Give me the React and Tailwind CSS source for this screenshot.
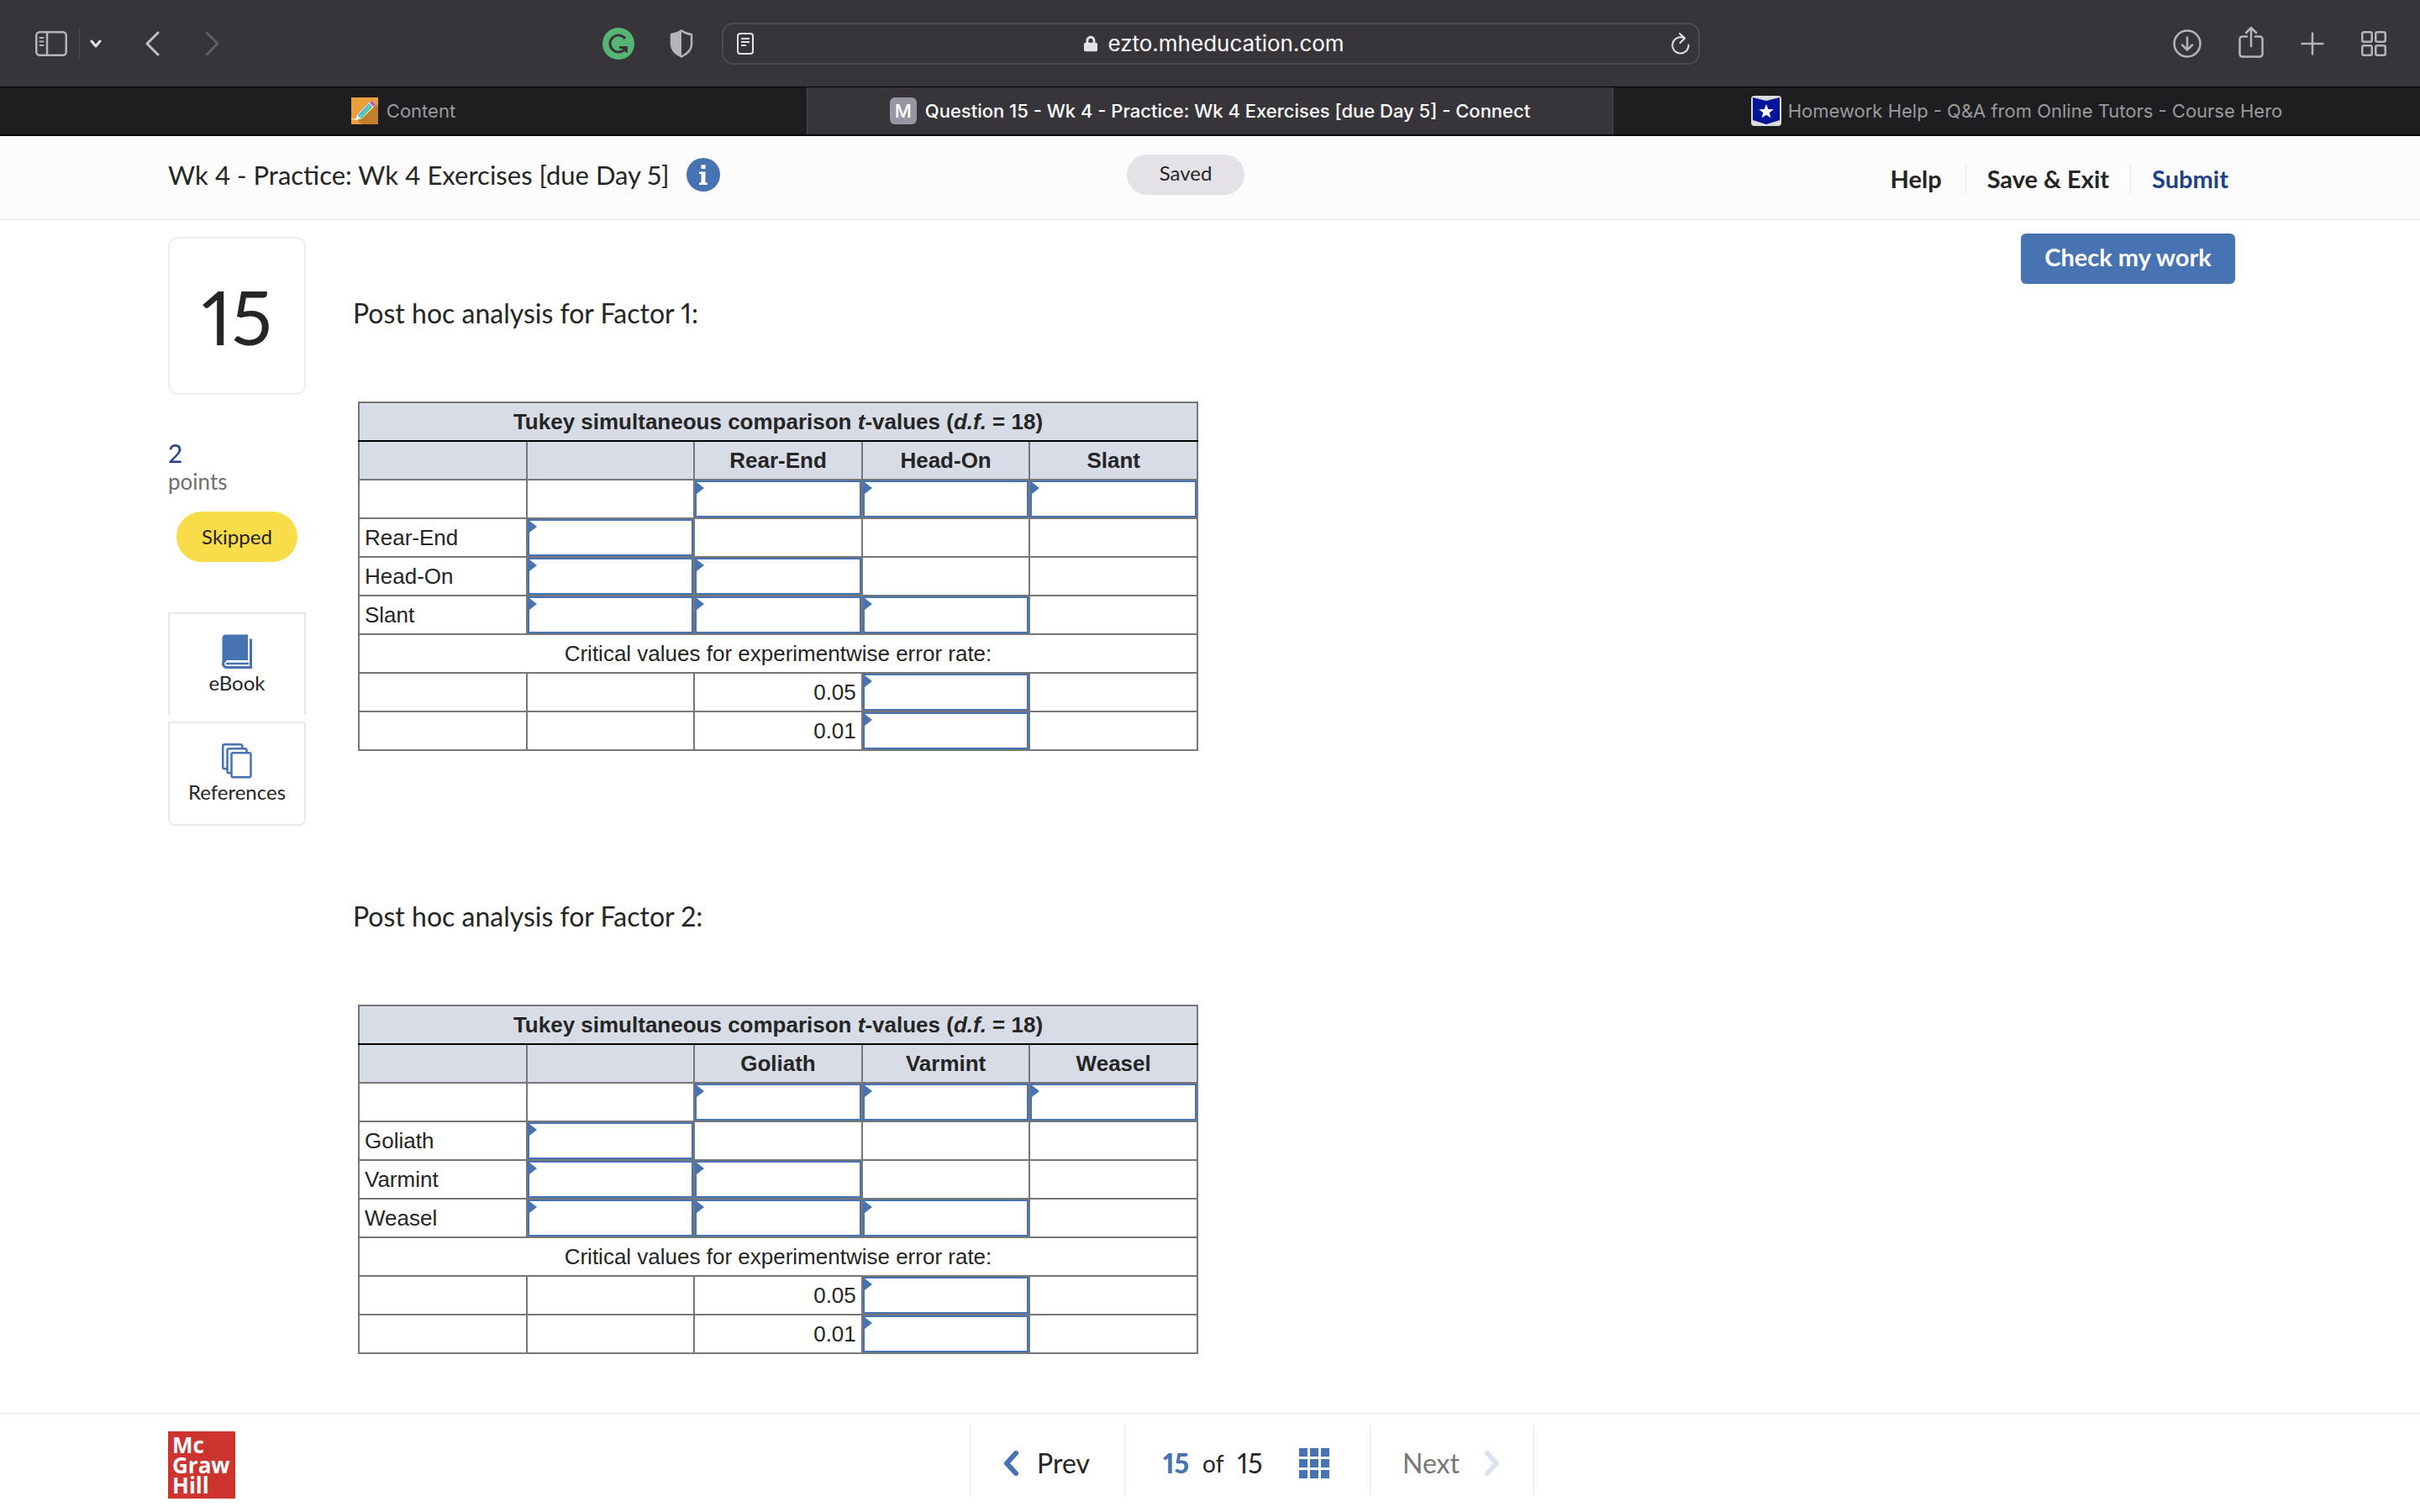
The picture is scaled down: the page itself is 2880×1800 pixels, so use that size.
import { FaLock } from 'react-icons/fa'

const factors = [
  { title: 'Post hoc analysis for Factor 1:', levels: ['Rear-End', 'Head-On', 'Slant'] },
  { title: 'Post hoc analysis for Factor 2:', levels: ['Goliath', 'Varmint', 'Weasel'] },
]

const SidebarIcon = () => (
  <svg className="w-[38px] h-[30px]" viewBox="0 0 38 30" fill="none" stroke="#b6b4b9" strokeWidth="2.5">
    <rect x="1.25" y="1.25" width="35.5" height="27.5" rx="4" />
    <path d="M14 1v28" />
    <path d="M5.5 8h4M5.5 12.5h4M5.5 17h4" strokeWidth="2" strokeLinecap="round" />
  </svg>
)

const Grammarly = () => (
  <svg className="w-[38px] h-[38px]" viewBox="0 0 38 38" fill="none">
    <circle cx="19" cy="19" r="19" fill="#54b574" />
    <path d="M27 13A10 10 0 1 0 27 25M20 23.5h8.5v6" stroke="#37353a" strokeWidth="3" />
  </svg>
)

const Shield = () => (
  <svg className="w-7 h-[34px]" viewBox="0 0 28 34">
    <path d="M14 1.5c3.5 2.5 7.5 4 12 4.5v12c0 6.5-5 11-12 14.5C7 29 2 24.5 2 18V6c4.5-.5 8.5-2 12-4.5z" fill="none" stroke="#b6b4b9" strokeWidth="2.5" strokeLinejoin="round" />
    <path d="M14 1.5v31C7 29 2 24.5 2 18V6c4.5-.5 8.5-2 12-4.5z" fill="#b6b4b9" />
  </svg>
)

const ReaderIcon = () => (
  <svg className="w-5 h-[26px]" viewBox="0 0 20 26" fill="none" stroke="#e2e1e4" strokeWidth="2">
    <rect x="1" y="1" width="18" height="24" rx="3" />
    <path d="M5 7h10M5 11h10M5 15h6" />
  </svg>
)

const Reload = () => (
  <svg className="w-[22px] h-[26px]" viewBox="0 0 22 26" fill="none" stroke="#e2e1e4" strokeWidth="2" strokeLinecap="round" strokeLinejoin="round">
    <path d="M20.5 14.5A9.6 9.6 0 1 1 15 6.2M10 1l6 5.5-5.5 5.5" />
  </svg>
)

const Download = () => (
  <svg className="w-[34px] h-[34px]" viewBox="0 0 34 34" fill="none" stroke="#b6b4b9" strokeWidth="2.5" strokeLinecap="round" strokeLinejoin="round">
    <circle cx="17" cy="17" r="15.5" />
    <path d="M17 9.500v14.500M11 18.500l6 6 6-6" />
  </svg>
)

const Share = () => (
  <svg className="w-[30px] h-[38px]" viewBox="0 0 30 38" fill="none" stroke="#b6b4b9" strokeWidth="2.5" strokeLinecap="round" strokeLinejoin="round">
    <path d="M10 12.5H4.5a3 3 0 0 0-3 3v18a3 3 0 0 0 3 3h21a3 3 0 0 0 3-3v-18a3 3 0 0 0-3-3H20M15 24V2M9 8l6-6 6 6" />
  </svg>
)

const Plus = () => (
  <svg className="w-7 h-7" viewBox="0 0 28 28" fill="none" stroke="#b6b4b9" strokeWidth="2.5" strokeLinecap="round">
    <path d="M14 1.5v25M1.5 14h25" />
  </svg>
)

const TabGrid = () => (
  <svg className="w-[30px] h-[30px]" viewBox="0 0 30 30" fill="none" stroke="#b6b4b9" strokeWidth="2.5">
    <rect x="1.25" y="1.25" width="11.5" height="11.5" rx="2" />
    <rect x="17.25" y="1.25" width="11.5" height="11.5" rx="2" />
    <rect x="1.25" y="17.25" width="11.5" height="11.5" rx="2" />
    <rect x="17.25" y="17.25" width="11.5" height="11.5" rx="2" />
  </svg>
)

const PencilFavicon = () => (
  <svg className="w-8 h-8" viewBox="0 0 32 32">
    <rect width="32" height="32" fill="#eb9f3b" />
    <path d="M29 8l3 3v21H12l-4-5z" fill="#c17e2d" />
    <path d="M0 26h8" stroke="#f6d9a8" strokeWidth="1.5" />
    <path d="M5 27l2-6L23 4l6 5-16 16z" fill="#fff" />
    <path d="M7.5 21.5L21 7l2 1.8L10 24z" fill="#4fb5e6" />
    <path d="M10 24L23 8.8l2.500 2.200L12.500 25z" fill="#5cc98a" />
    <path d="M21.5 6L24 4l5 4.500-2.500 2.500z" fill="#a95fc0" />
  </svg>
)

const CourseHeroFavicon = () => (
  <svg className="w-9 h-9" viewBox="0 0 36 36">
    <rect width="36" height="36" rx="4" fill="#dcdcde" />
    <path d="M2 2l16 4 16-4v27l-16 5L2 29z" fill="#04159a" />
    <path d="M18 10l2.3 5.9 6.3.3-4.9 4 1.7 6.1-5.4-3.5-5.4 3.5 1.7-6.1-4.9-4 6.3-.3z" fill="#fff" />
  </svg>
)

const Info = () => (
  <svg className="w-10 h-10" viewBox="0 0 40 40">
    <circle cx="20" cy="20" r="20" fill="#4873b3" />
    <path d="M17.5 8h5v5h-5zM15 16.5h7.5v13H25V32H15v-2.5h2.5V19H15z" fill="#fff" />
  </svg>
)

const BookIcon = () => (
  <svg className="w-9 h-[42px]" viewBox="0 0 36 42">
    <path d="M5 .5h26V31H5.5C3 31 1.5 32 .5 33.5V5C.5 2 2 .5 5 .5z" fill="#4873b3" />
    <path d="M34.5 5.5v34H6A4.5 4.500 0 0 1 1.500 35c0-2.500 2-3.500 4.500-3.500" fill="none" stroke="#4873b3" strokeWidth="3" />
    <path d="M5 31.500h26v8H5z" fill="#fff" />
    <path d="M35.5 39.500H6A4.500 4.500 0 0 1 1.500 35" fill="none" stroke="#4873b3" strokeWidth="3" />
    <path d="M6 35h25" stroke="#4873b3" strokeWidth="2.5" strokeLinecap="round" />
  </svg>
)

const ReferencesIcon = () => (
  <svg className="w-9 h-[42px]" viewBox="0 0 36 42" fill="#fff" stroke="#4873b3" strokeWidth="2.5">
    <rect x="1.25" y="1.25" width="23" height="29" rx="2" />
    <rect x="6.5" y="6.25" width="23" height="29" rx="2" />
    <rect x="11.5" y="11.25" width="23" height="29" rx="2" />
  </svg>
)

const QuestionGrid = () => (
  <svg className="w-9 h-9" viewBox="0 0 36 36" fill="#4873b3">
    {[0, 13, 26].map((y) =>
      [0, 13, 26].map((x) => <rect key={`${x}-${y}`} x={x} y={y} width="10" height="10" />)
    )}
  </svg>
)

const Chevron = ({ d, className }) => (
  <svg className={className} viewBox="0 0 18 30" fill="none" stroke="currentColor" strokeLinecap="round" strokeLinejoin="round">
    <path d={d} />
  </svg>
)

const LEFT = 'M15 3L4 15l11 12'
const RIGHT = 'M3 3l11 12L3 27'

const BrowserBar = () => (
  <div className="flex items-center h-[104px] bg-[#37353a] border-b border-black pl-[42px] pr-10">
    <div className="flex flex-1 items-center">
      <button aria-label="Sidebar"><SidebarIcon /></button>
      <div className="w-px h-9 ml-[14px] bg-[#4c4a4f]" />
      <button aria-label="Tab groups" className="ml-3">
        <svg className="w-[14px] h-[10px]" viewBox="0 0 14 10" fill="none" stroke="#e2e1e4" strokeWidth="3" strokeLinecap="round" strokeLinejoin="round">
          <path d="M2 2l5 6 5-6" />
        </svg>
      </button>
      <button aria-label="Back" className="ml-[51px] text-[#c0bec3]">
        <Chevron d="M16 2L3 15l13 13" className="w-[18px] h-[30px] stroke-[3]" />
      </button>
      <button aria-label="Forward" className="ml-[54px] text-[#605e63]">
        <Chevron d="M2 2l13 13L2 28" className="w-[18px] h-[30px] stroke-[3]" />
      </button>
      <div className="flex items-center gap-[42px] ml-auto mr-[34px]">
        <button aria-label="Grammarly"><Grammarly /></button>
        <button aria-label="Privacy report"><Shield /></button>
      </div>
    </div>
    <div className="flex items-center w-[1164px] h-[50px] pl-4 pr-[10px] rounded-[14px] border-2 border-[#4c4a4f]">
      <ReaderIcon />
      <div className="flex flex-1 items-center justify-center gap-3 pl-1 text-[26px] leading-8 text-white">
        <FaLock className="w-4 h-6 text-[#e2e1e4]" />
        <span>ezto.mheducation.com</span>
      </div>
      <button aria-label="Reload"><Reload /></button>
    </div>
    <div className="flex flex-1 items-center justify-end gap-11">
      <button aria-label="Downloads"><Download /></button>
      <button aria-label="Share" className="-mt-1"><Share /></button>
      <button aria-label="New tab"><Plus /></button>
      <button aria-label="All tabs"><TabGrid /></button>
    </div>
  </div>
)

const Tabs = () => (
  <div className="grid grid-cols-3 h-[58px] bg-[#1e1e20] border-b-2 border-black text-[22px] leading-7 text-[#9a9a9c]">
    <div className="flex items-center justify-center gap-[10px]">
      <PencilFavicon />
      <span>Content</span>
    </div>
    <div className="flex items-center justify-center gap-[10px] bg-[#37353a] border-x border-[#4c4a4f] font-medium text-white">
      <span className="flex items-center justify-center w-8 h-8 rounded-md bg-[#9896a3]">M</span>
      <span>Question 15 - Wk 4 - Practice: Wk 4 Exercises [due Day 5] - Connect</span>
    </div>
    <div className="flex items-center justify-center gap-2">
      <CourseHeroFavicon />
      <span>Homework Help - Q&A from Online Tutors - Course Hero</span>
    </div>
  </div>
)

const Header = () => (
  <header className="flex items-center h-[100px] pl-[200px] pr-[228px] bg-[#fcfcfc] border-b-2 border-[#eeeeee]">
    <div className="flex flex-1 items-center gap-5 pb-[6px]">
      <h1 className="text-[31px] leading-10">Wk 4 - Practice: Wk 4 Exercises [due Day 5]</h1>
      <button aria-label="Assignment info"><Info /></button>
    </div>
    <div className="pb-[6px] mr-[30px]">
      <div className="flex items-center justify-center w-[140px] h-12 pb-1 rounded-full bg-[#e4e2e6] text-[24px] leading-8">Saved</div>
    </div>
    <nav className="flex flex-1 justify-end pt-1 text-[29px] leading-9 font-bold">
      <a href="#" className="pr-7">Help</a>
      <a href="#" className="px-[25px] border-l border-[#e8e8e8]">Save & Exit</a>
      <a href="#" className="pl-[25px] border-l border-[#e8e8e8] text-[#1f4287]">Submit</a>
    </nav>
  </header>
)

const Sidebar = () => (
  <aside className="w-[164px] mr-14">
    <div className="flex items-center justify-center h-[188px] rounded-xl border-2 border-[#eeeeee] text-[90px] leading-none">15</div>
    <div className="mt-[49px] text-[30px] leading-10 text-[#1f4287]">2</div>
    <div className="text-[26px] leading-7 text-[#6f6f6f]">points</div>
    <div className="flex items-center justify-center w-36 h-[60px] mx-auto mt-[22px] rounded-full bg-[#f8dc4a] text-[24px] leading-8">Skipped</div>
    <button className="flex flex-col items-center w-full h-[122px] mt-[60px] pt-6 border-2 border-b-0 border-[#e8e8e8] text-[24px] leading-8">
      <BookIcon />
      eBook
    </button>
    <button className="flex flex-col items-center w-full h-[124px] mt-2 pt-6 rounded-b-lg border-2 border-[#e8e8e8] text-[24px] leading-8">
      <ReferencesIcon />
      References
    </button>
  </aside>
)

const Cell = ({ children, className = '' }) => (
  <td className={`h-[46px] border-2 border-[#777777] px-[6px] ${className}`}>{children}</td>
)

const InputCell = ({ label }) => (
  <td className="relative h-[46px] border-2 border-[#777777] p-0">
    <input type="text" aria-label={label} className="block w-full h-11 px-3 border-2 border-[#4873b3] outline-none" />
    <svg className="absolute left-0 top-0.5 w-[11px] h-[14px]" viewBox="0 0 11 14" fill="#4873b3">
      <path d="M0 0h2l9 7-9 7H0z" />
    </svg>
  </td>
)

const TukeyTable = ({ levels }) => (
  <table className="w-[1000px] ml-[6px] table-fixed border-collapse font-['Liberation_Sans',Arial,sans-serif] text-[26px] leading-8">
    <thead className="bg-[#d8dce6]">
      <tr>
        <th colSpan={5} className="h-[46px] border-2 border-[#777777] border-b-black">
          Tukey simultaneous comparison <i>t</i>-values (<i>d.f.</i> = 18)
        </th>
      </tr>
      <tr>
        {['', '', ...levels].map((level, i) => (
          <th key={i} className="h-[46px] border-2 border-[#777777] border-t-black">{level}</th>
        ))}
      </tr>
    </thead>
    <tbody>
      <tr>
        <Cell />
        <Cell />
        {levels.map((level) => <InputCell key={level} label={`${level} column mean`} />)}
      </tr>
      {levels.map((level, row) => (
        <tr key={level}>
          <Cell>{level}</Cell>
          <InputCell label={`${level} row mean`} />
          {levels.map((other, col) =>
            col < row ? <InputCell key={other} label={`${level} vs ${other}`} /> : <Cell key={other} />
          )}
        </tr>
      ))}
      <tr>
        <td colSpan={5} className="h-[46px] border-2 border-[#777777] text-center">
          Critical values for experimentwise error rate:
        </td>
      </tr>
      {['0.05', '0.01'].map((rate) => (
        <tr key={rate}>
          <Cell />
          <Cell />
          <Cell className="text-right">{rate}</Cell>
          <InputCell label={`Critical value at ${rate}`} />
          <Cell />
        </tr>
      ))}
    </tbody>
  </table>
)

const Footer = () => (
  <footer className="flex h-[118px] pl-[200px] pr-[100px] border-t-2 border-[#f2f2f2] text-[32px] leading-10">
    <div className="flex-1 pt-5">
      <div className="w-20 h-20 pl-[5px] pt-1 bg-[#cd332f] font-['Open_Sans',sans-serif] text-[26px] leading-6 font-bold text-white">
        <div>Mc</div>
        <div>Graw</div>
        <div>Hill</div>
      </div>
    </div>
    <nav className="flex h-[86px] mt-[10px] border-x-2 border-[#f2f2f2]">
      <button className="flex items-center gap-[22px] w-[182px] pl-[38px] pt-[10px]">
        <Chevron d={LEFT} className="w-[18px] h-[30px] stroke-[6] text-[#4873b3]" />
        Prev
      </button>
      <div className="flex items-center justify-between w-[294px] pl-11 pr-12 pt-[10px] border-x-2 border-[#f2f2f2]">
        <div className="flex items-center gap-4">
          <span className="font-black text-[#4873b3]">15</span>
          <span className="text-[28px]">of</span>
          <span>15</span>
        </div>
        <button aria-label="All questions"><QuestionGrid /></button>
      </div>
      <button disabled className="flex items-center gap-[30px] w-[192px] pl-[37px] pt-[10px] text-[#777777]">
        Next
        <Chevron d={RIGHT} className="w-[18px] h-[30px] stroke-[6] text-[#dae3f0]" />
      </button>
    </nav>
    <div className="flex-1" />
  </footer>
)

const App = () => {
  return (
    <div className="flex flex-col min-h-screen bg-white font-['Lato',sans-serif] proportional-nums text-[#252525]">
      <div className="font-['Inter',sans-serif]">
        <BrowserBar />
        <Tabs />
      </div>
      <Header />
      <main className="flex flex-1 items-start pl-[200px] pr-[220px]">
        <div className="flex flex-1 pt-5">
          <Sidebar />
          <div className="pt-[71px]">
            {factors.map((factor) => (
              <section key={factor.title} className="mb-[177px] last:mb-0">
                <h2 className="mb-[85px] text-[32px] leading-10">{factor.title}</h2>
                <TukeyTable levels={factor.levels} />
              </section>
            ))}
          </div>
        </div>
        <button className="w-[255px] h-[60px] mt-4 pb-1 rounded-md bg-[#4873b3] text-[29px] leading-9 font-bold text-white">Check my work</button>
      </main>
      <Footer />
    </div>
  )
}

export default App
